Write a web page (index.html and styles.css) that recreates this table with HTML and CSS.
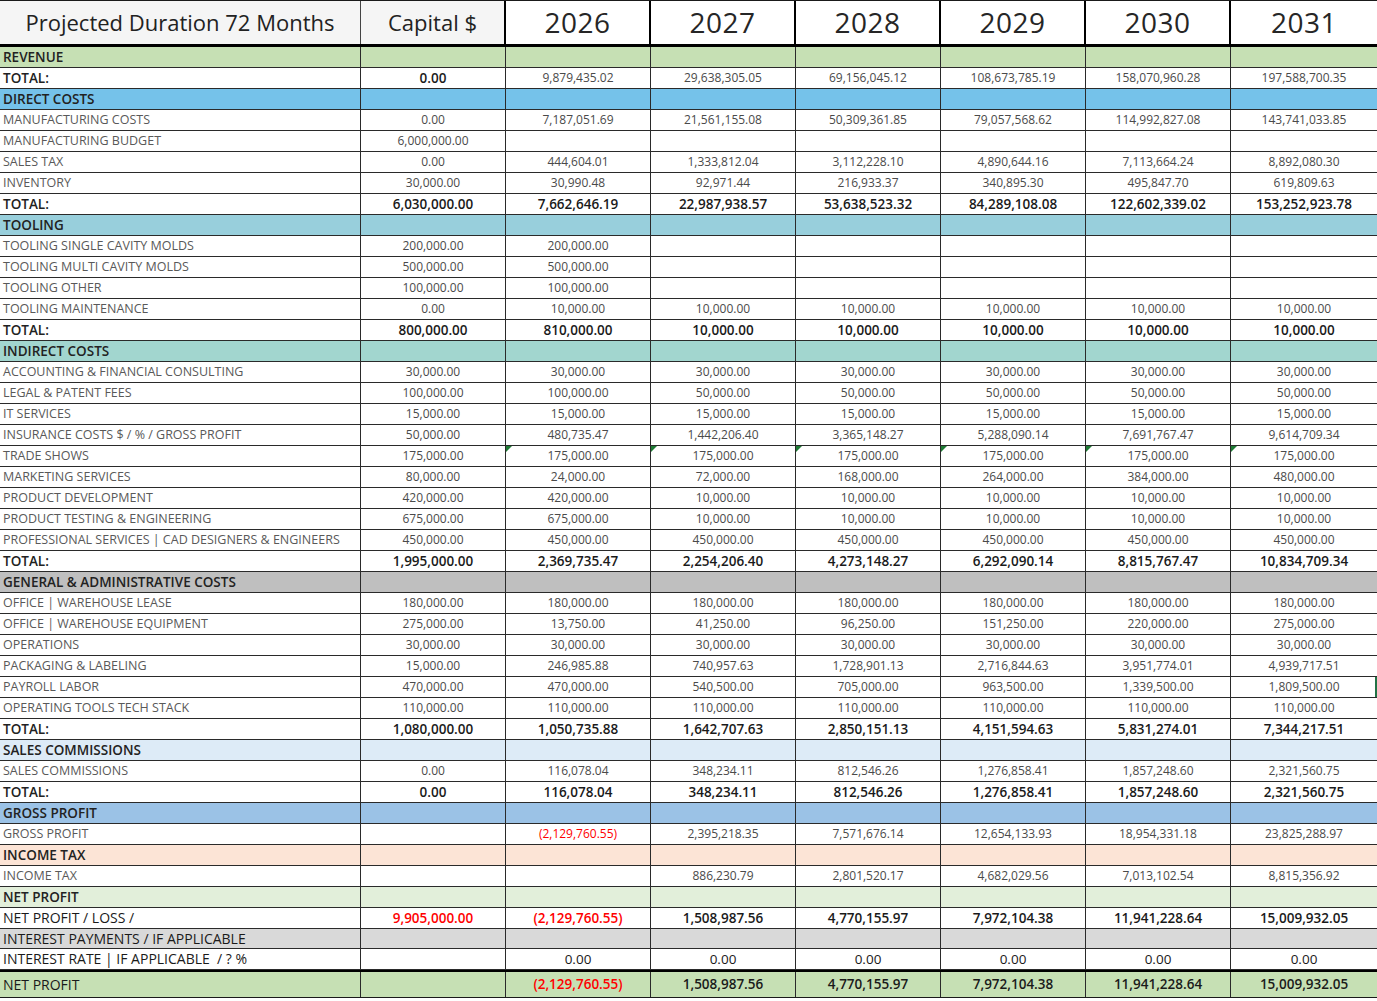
FILE: index.html
```html
<!DOCTYPE html>
<html>
<head>
<meta charset="utf-8">
<link rel="stylesheet" href="styles.css">
</head>
<body>
<div class="sheet">
  <div class="row head">
    <div class="c h-title">Projected Duration 72 Months</div>
    <div class="c h-cap">Capital $</div>
    <div class="c h-year">2026</div>
    <div class="c h-year">2027</div>
    <div class="c h-year">2028</div>
    <div class="c h-year">2029</div>
    <div class="c h-year">2030</div>
    <div class="c h-year">2031</div>
  </div>

  <div class="row sec bg-rev"><div class="c lbl">REVENUE</div><div class="c"></div><div class="c"></div><div class="c"></div><div class="c"></div><div class="c"></div><div class="c"></div><div class="c"></div></div>
  <div class="row"><div class="c lbl strong">TOTAL:</div><div class="c v strong">0.00</div><div class="c v">9,879,435.02</div><div class="c v">29,638,305.05</div><div class="c v">69,156,045.12</div><div class="c v">108,673,785.19</div><div class="c v">158,070,960.28</div><div class="c v">197,588,700.35</div></div>

  <div class="row sec bg-direct"><div class="c lbl">DIRECT COSTS</div><div class="c"></div><div class="c"></div><div class="c"></div><div class="c"></div><div class="c"></div><div class="c"></div><div class="c"></div></div>
  <div class="row"><div class="c lbl">MANUFACTURING COSTS</div><div class="c v">0.00</div><div class="c v">7,187,051.69</div><div class="c v">21,561,155.08</div><div class="c v">50,309,361.85</div><div class="c v">79,057,568.62</div><div class="c v">114,992,827.08</div><div class="c v">143,741,033.85</div></div>
  <div class="row"><div class="c lbl">MANUFACTURING BUDGET</div><div class="c v">6,000,000.00</div><div class="c v"></div><div class="c v"></div><div class="c v"></div><div class="c v"></div><div class="c v"></div><div class="c v"></div></div>
  <div class="row"><div class="c lbl">SALES TAX</div><div class="c v">0.00</div><div class="c v">444,604.01</div><div class="c v">1,333,812.04</div><div class="c v">3,112,228.10</div><div class="c v">4,890,644.16</div><div class="c v">7,113,664.24</div><div class="c v">8,892,080.30</div></div>
  <div class="row"><div class="c lbl">INVENTORY</div><div class="c v">30,000.00</div><div class="c v">30,990.48</div><div class="c v">92,971.44</div><div class="c v">216,933.37</div><div class="c v">340,895.30</div><div class="c v">495,847.70</div><div class="c v">619,809.63</div></div>
  <div class="row"><div class="c lbl strong">TOTAL:</div><div class="c v strong">6,030,000.00</div><div class="c v strong">7,662,646.19</div><div class="c v strong">22,987,938.57</div><div class="c v strong">53,638,523.32</div><div class="c v strong">84,289,108.08</div><div class="c v strong">122,602,339.02</div><div class="c v strong">153,252,923.78</div></div>

  <div class="row sec bg-tool"><div class="c lbl">TOOLING</div><div class="c"></div><div class="c"></div><div class="c"></div><div class="c"></div><div class="c"></div><div class="c"></div><div class="c"></div></div>
  <div class="row"><div class="c lbl">TOOLING SINGLE CAVITY MOLDS</div><div class="c v">200,000.00</div><div class="c v">200,000.00</div><div class="c v"></div><div class="c v"></div><div class="c v"></div><div class="c v"></div><div class="c v"></div></div>
  <div class="row"><div class="c lbl">TOOLING MULTI CAVITY MOLDS</div><div class="c v">500,000.00</div><div class="c v">500,000.00</div><div class="c v"></div><div class="c v"></div><div class="c v"></div><div class="c v"></div><div class="c v"></div></div>
  <div class="row"><div class="c lbl">TOOLING OTHER</div><div class="c v">100,000.00</div><div class="c v">100,000.00</div><div class="c v"></div><div class="c v"></div><div class="c v"></div><div class="c v"></div><div class="c v"></div></div>
  <div class="row"><div class="c lbl">TOOLING MAINTENANCE</div><div class="c v">0.00</div><div class="c v">10,000.00</div><div class="c v">10,000.00</div><div class="c v">10,000.00</div><div class="c v">10,000.00</div><div class="c v">10,000.00</div><div class="c v">10,000.00</div></div>
  <div class="row"><div class="c lbl strong">TOTAL:</div><div class="c v strong">800,000.00</div><div class="c v strong">810,000.00</div><div class="c v strong">10,000.00</div><div class="c v strong">10,000.00</div><div class="c v strong">10,000.00</div><div class="c v strong">10,000.00</div><div class="c v strong">10,000.00</div></div>

  <div class="row sec bg-indirect"><div class="c lbl">INDIRECT COSTS</div><div class="c"></div><div class="c"></div><div class="c"></div><div class="c"></div><div class="c"></div><div class="c"></div><div class="c"></div></div>
  <div class="row"><div class="c lbl">ACCOUNTING &amp; FINANCIAL CONSULTING</div><div class="c v">30,000.00</div><div class="c v">30,000.00</div><div class="c v">30,000.00</div><div class="c v">30,000.00</div><div class="c v">30,000.00</div><div class="c v">30,000.00</div><div class="c v">30,000.00</div></div>
  <div class="row"><div class="c lbl">LEGAL &amp; PATENT FEES</div><div class="c v">100,000.00</div><div class="c v">100,000.00</div><div class="c v">50,000.00</div><div class="c v">50,000.00</div><div class="c v">50,000.00</div><div class="c v">50,000.00</div><div class="c v">50,000.00</div></div>
  <div class="row"><div class="c lbl">IT SERVICES</div><div class="c v">15,000.00</div><div class="c v">15,000.00</div><div class="c v">15,000.00</div><div class="c v">15,000.00</div><div class="c v">15,000.00</div><div class="c v">15,000.00</div><div class="c v">15,000.00</div></div>
  <div class="row"><div class="c lbl">INSURANCE COSTS $ / % / GROSS PROFIT</div><div class="c v">50,000.00</div><div class="c v">480,735.47</div><div class="c v">1,442,206.40</div><div class="c v">3,365,148.27</div><div class="c v">5,288,090.14</div><div class="c v">7,691,767.47</div><div class="c v">9,614,709.34</div></div>
  <div class="row"><div class="c lbl">TRADE SHOWS</div><div class="c v">175,000.00</div><div class="c v flag">175,000.00</div><div class="c v flag">175,000.00</div><div class="c v flag">175,000.00</div><div class="c v flag">175,000.00</div><div class="c v flag">175,000.00</div><div class="c v flag">175,000.00</div></div>
  <div class="row"><div class="c lbl">MARKETING SERVICES</div><div class="c v">80,000.00</div><div class="c v">24,000.00</div><div class="c v">72,000.00</div><div class="c v">168,000.00</div><div class="c v">264,000.00</div><div class="c v">384,000.00</div><div class="c v">480,000.00</div></div>
  <div class="row"><div class="c lbl">PRODUCT DEVELOPMENT</div><div class="c v">420,000.00</div><div class="c v">420,000.00</div><div class="c v">10,000.00</div><div class="c v">10,000.00</div><div class="c v">10,000.00</div><div class="c v">10,000.00</div><div class="c v">10,000.00</div></div>
  <div class="row"><div class="c lbl">PRODUCT TESTING &amp; ENGINEERING</div><div class="c v">675,000.00</div><div class="c v">675,000.00</div><div class="c v">10,000.00</div><div class="c v">10,000.00</div><div class="c v">10,000.00</div><div class="c v">10,000.00</div><div class="c v">10,000.00</div></div>
  <div class="row"><div class="c lbl">PROFESSIONAL SERVICES | CAD DESIGNERS &amp; ENGINEERS</div><div class="c v">450,000.00</div><div class="c v">450,000.00</div><div class="c v">450,000.00</div><div class="c v">450,000.00</div><div class="c v">450,000.00</div><div class="c v">450,000.00</div><div class="c v">450,000.00</div></div>
  <div class="row"><div class="c lbl strong">TOTAL:</div><div class="c v strong">1,995,000.00</div><div class="c v strong">2,369,735.47</div><div class="c v strong">2,254,206.40</div><div class="c v strong">4,273,148.27</div><div class="c v strong">6,292,090.14</div><div class="c v strong">8,815,767.47</div><div class="c v strong">10,834,709.34</div></div>

  <div class="row sec bg-ga"><div class="c lbl">GENERAL &amp; ADMINISTRATIVE COSTS</div><div class="c"></div><div class="c"></div><div class="c"></div><div class="c"></div><div class="c"></div><div class="c"></div><div class="c"></div></div>
  <div class="row"><div class="c lbl">OFFICE | WAREHOUSE LEASE</div><div class="c v">180,000.00</div><div class="c v">180,000.00</div><div class="c v">180,000.00</div><div class="c v">180,000.00</div><div class="c v">180,000.00</div><div class="c v">180,000.00</div><div class="c v">180,000.00</div></div>
  <div class="row"><div class="c lbl">OFFICE | WAREHOUSE EQUIPMENT</div><div class="c v">275,000.00</div><div class="c v">13,750.00</div><div class="c v">41,250.00</div><div class="c v">96,250.00</div><div class="c v">151,250.00</div><div class="c v">220,000.00</div><div class="c v">275,000.00</div></div>
  <div class="row"><div class="c lbl">OPERATIONS</div><div class="c v">30,000.00</div><div class="c v">30,000.00</div><div class="c v">30,000.00</div><div class="c v">30,000.00</div><div class="c v">30,000.00</div><div class="c v">30,000.00</div><div class="c v">30,000.00</div></div>
  <div class="row"><div class="c lbl">PACKAGING &amp; LABELING</div><div class="c v">15,000.00</div><div class="c v">246,985.88</div><div class="c v">740,957.63</div><div class="c v">1,728,901.13</div><div class="c v">2,716,844.63</div><div class="c v">3,951,774.01</div><div class="c v">4,939,717.51</div></div>
  <div class="row"><div class="c lbl">PAYROLL LABOR</div><div class="c v">470,000.00</div><div class="c v">470,000.00</div><div class="c v">540,500.00</div><div class="c v">705,000.00</div><div class="c v">963,500.00</div><div class="c v">1,339,500.00</div><div class="c v sel">1,809,500.00</div></div>
  <div class="row"><div class="c lbl">OPERATING TOOLS TECH STACK</div><div class="c v">110,000.00</div><div class="c v">110,000.00</div><div class="c v">110,000.00</div><div class="c v">110,000.00</div><div class="c v">110,000.00</div><div class="c v">110,000.00</div><div class="c v">110,000.00</div></div>
  <div class="row"><div class="c lbl strong">TOTAL:</div><div class="c v strong">1,080,000.00</div><div class="c v strong">1,050,735.88</div><div class="c v strong">1,642,707.63</div><div class="c v strong">2,850,151.13</div><div class="c v strong">4,151,594.63</div><div class="c v strong">5,831,274.01</div><div class="c v strong">7,344,217.51</div></div>

  <div class="row sec bg-sales"><div class="c lbl">SALES COMMISSIONS</div><div class="c"></div><div class="c"></div><div class="c"></div><div class="c"></div><div class="c"></div><div class="c"></div><div class="c"></div></div>
  <div class="row"><div class="c lbl">SALES COMMISSIONS</div><div class="c v">0.00</div><div class="c v">116,078.04</div><div class="c v">348,234.11</div><div class="c v">812,546.26</div><div class="c v">1,276,858.41</div><div class="c v">1,857,248.60</div><div class="c v">2,321,560.75</div></div>
  <div class="row"><div class="c lbl strong">TOTAL:</div><div class="c v strong">0.00</div><div class="c v strong">116,078.04</div><div class="c v strong">348,234.11</div><div class="c v strong">812,546.26</div><div class="c v strong">1,276,858.41</div><div class="c v strong">1,857,248.60</div><div class="c v strong">2,321,560.75</div></div>

  <div class="row sec bg-gross"><div class="c lbl">GROSS PROFIT</div><div class="c"></div><div class="c"></div><div class="c"></div><div class="c"></div><div class="c"></div><div class="c"></div><div class="c"></div></div>
  <div class="row"><div class="c lbl">GROSS PROFIT</div><div class="c v"></div><div class="c v neg">(2,129,760.55)</div><div class="c v">2,395,218.35</div><div class="c v">7,571,676.14</div><div class="c v">12,654,133.93</div><div class="c v">18,954,331.18</div><div class="c v">23,825,288.97</div></div>

  <div class="row sec bg-tax"><div class="c lbl">INCOME TAX</div><div class="c"></div><div class="c"></div><div class="c"></div><div class="c"></div><div class="c"></div><div class="c"></div><div class="c"></div></div>
  <div class="row"><div class="c lbl">INCOME TAX</div><div class="c v"></div><div class="c v"></div><div class="c v">886,230.79</div><div class="c v">2,801,520.17</div><div class="c v">4,682,029.56</div><div class="c v">7,013,102.54</div><div class="c v">8,815,356.92</div></div>

  <div class="row sec bg-net"><div class="c lbl">NET PROFIT</div><div class="c"></div><div class="c"></div><div class="c"></div><div class="c"></div><div class="c"></div><div class="c"></div><div class="c"></div></div>
  <div class="row"><div class="c lbl dark">NET PROFIT / LOSS /</div><div class="c v semi neg">9,905,000.00</div><div class="c v semi neg">(2,129,760.55)</div><div class="c v strong">1,508,987.56</div><div class="c v strong">4,770,155.97</div><div class="c v strong">7,972,104.38</div><div class="c v strong">11,941,228.64</div><div class="c v strong">15,009,932.05</div></div>

  <div class="row sec short bg-int"><div class="c lbl dark">INTEREST PAYMENTS / IF APPLICABLE</div><div class="c"></div><div class="c"></div><div class="c"></div><div class="c"></div><div class="c"></div><div class="c"></div><div class="c"></div></div>
  <div class="row"><div class="c lbl dark">INTEREST RATE | IF APPLICABLE&nbsp; / ? %</div><div class="c v"></div><div class="c v dark">0.00</div><div class="c v dark">0.00</div><div class="c v dark">0.00</div><div class="c v dark">0.00</div><div class="c v dark">0.00</div><div class="c v dark">0.00</div></div>

  <div class="row final bg-rev"><div class="c lbl dark">NET PROFIT</div><div class="c v"></div><div class="c v semi neg">(2,129,760.55)</div><div class="c v strong">1,508,987.56</div><div class="c v strong">4,770,155.97</div><div class="c v strong">7,972,104.38</div><div class="c v strong">11,941,228.64</div><div class="c v strong">15,009,932.05</div></div>
</div>
</body>
</html>
```

FILE: styles.css
```css
html, body {
  margin: 0;
  padding: 0;
  background: #ffffff;
}

body {
  font-family: "Open Sans", "Liberation Sans", sans-serif;
  color: #333333;
}

.sheet {
  width: 1377px;
  border-top: 1px solid #1a1a1a;
}

.row {
  display: grid;
  grid-template-columns: 361px repeat(6, 145px) 146px;
  height: 21px;
  border-bottom: 1px solid #2a2a2a;
  box-sizing: border-box;
}

.row.short {
  height: 20px;
}

.c {
  position: relative;
  border-right: 1px solid #2a2a2a;
  box-sizing: border-box;
  display: flex;
  align-items: center;
  justify-content: center;
  white-space: nowrap;
  overflow: hidden;
  font-size: 12px;
  line-height: 20px;
}

.c:last-child {
  border-right: none;
}

.lbl {
  justify-content: flex-start;
  padding-left: 3px;
  font-size: 12.5px;
  color: #595959;
}

.v {
  color: #4a4a4a;
}

.strong {
  font-size: 13.5px;
  font-weight: 600;
  color: #1a1a1a;
}

.lbl.strong {
  font-size: 13.5px;
  font-weight: 600;
  color: #222222;
}

.semi {
  font-size: 13.5px;
  font-weight: 600;
}

.dark {
  font-size: 13.5px;
  color: #1a1a1a;
}

.lbl.dark {
  font-size: 14px;
}

.neg {
  color: #ff0000;
}

.sec .lbl {
  font-size: 13.5px;
  font-weight: 600;
  color: #222222;
}

.sec .lbl.dark {
  font-size: 14px;
  font-weight: 400;
  color: #1a1a1a;
}

/* header */
.head {
  height: 46px;
  border-bottom: 3px solid #000000;
}

.head .c {
  font-size: 22px;
  line-height: 43px;
  color: #222222;
}

.h-title,
.h-cap {
  background: #f5f5f5;
}

.h-title {
  border-right: 1px solid #444444;
}

.h-cap,
.h-year {
  border-right: 2px solid #000000;
}

.head .h-year {
  font-size: 28px;
  background: #ffffff;
  color: #262626;
  letter-spacing: 0.5px;
}

/* section backgrounds */
.bg-rev { background: #c6e0b4; }
.bg-direct { background: #75c2ea; }
.bg-tool { background: #98cfdc; }
.bg-indirect { background: #a2d6cf; }
.bg-ga { background: #bfbfbf; }
.bg-sales { background: #ddebf7; }
.bg-gross { background: #9bc2e6; }
.bg-tax { background: #fce4d6; }
.bg-net { background: #e2efda; }
.bg-int { background: #d9d9d9; }

/* final row */
.final {
  height: 28px;
  border-top: 2px solid #000000;
  border-bottom: 1px solid #1a1a1a;
}

.final .c {
  line-height: 25px;
}

/* excel green error indicator */
.flag::before {
  content: "";
  position: absolute;
  left: 0;
  top: 0;
  width: 0;
  height: 0;
  border-top: 6px solid #1e7b34;
  border-right: 6px solid transparent;
}

.sel::after {
  content: "";
  position: absolute;
  right: 0;
  top: 0;
  bottom: 0;
  width: 2px;
  background: #217346;
}
```
